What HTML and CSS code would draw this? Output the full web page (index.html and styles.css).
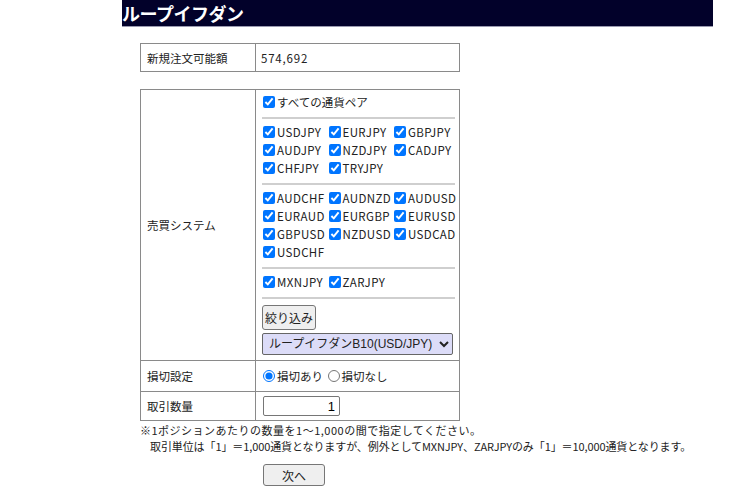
FILE: index.html
```html
<!DOCTYPE html>
<html lang="ja">
<head>
<meta charset="utf-8">
<link rel="stylesheet" href="styles.css">
</head>
<body>
<div class="page">
  <h1 class="title">ループイフダン</h1>
  <div class="content">
    <table class="tbl tbl1">
      <colgroup><col class="c-lbl"><col></colgroup>
      <tr><td class="lbl">新規注文可能額</td><td class="val num">574,692</td></tr>
    </table>
    <table class="tbl tbl2">
      <colgroup><col class="c-lbl"><col></colgroup>
      <tr class="r-sys">
        <td class="lbl">売買システム</td>
        <td class="val sys">
          <div class="line"><label class="ck"><input type="checkbox" checked>すべての通貨ペア</label></div>
          <hr>
          <div class="grid">
            <label class="ck"><input type="checkbox" checked>USDJPY</label>
            <label class="ck"><input type="checkbox" checked>EURJPY</label>
            <label class="ck"><input type="checkbox" checked>GBPJPY</label>
            <label class="ck"><input type="checkbox" checked>AUDJPY</label>
            <label class="ck"><input type="checkbox" checked>NZDJPY</label>
            <label class="ck"><input type="checkbox" checked>CADJPY</label>
            <label class="ck"><input type="checkbox" checked>CHFJPY</label>
            <label class="ck"><input type="checkbox" checked>TRYJPY</label>
          </div>
          <hr>
          <div class="grid">
            <label class="ck"><input type="checkbox" checked>AUDCHF</label>
            <label class="ck"><input type="checkbox" checked>AUDNZD</label>
            <label class="ck"><input type="checkbox" checked>AUDUSD</label>
            <label class="ck"><input type="checkbox" checked>EURAUD</label>
            <label class="ck"><input type="checkbox" checked>EURGBP</label>
            <label class="ck"><input type="checkbox" checked>EURUSD</label>
            <label class="ck"><input type="checkbox" checked>GBPUSD</label>
            <label class="ck"><input type="checkbox" checked>NZDUSD</label>
            <label class="ck"><input type="checkbox" checked>USDCAD</label>
            <label class="ck"><input type="checkbox" checked>USDCHF</label>
          </div>
          <hr>
          <div class="grid">
            <label class="ck"><input type="checkbox" checked>MXNJPY</label>
            <label class="ck"><input type="checkbox" checked>ZARJPY</label>
          </div>
          <hr>
          <div class="controls">
            <button class="btn filter" type="button">絞り込み</button>
            <select class="sel">
              <option>ループイフダンB10(USD/JPY)</option>
            </select>
          </div>
        </td>
      </tr>
      <tr class="r-stop">
        <td class="lbl">損切設定</td>
        <td class="val sub">
          <label class="rd"><input type="radio" name="stop" checked>損切あり</label>
          <label class="rd"><input type="radio" name="stop">損切なし</label>
        </td>
      </tr>
      <tr class="r-qty">
        <td class="lbl">取引数量</td>
        <td class="val sub"><input class="qty" type="text" value="1"></td>
      </tr>
    </table>
    <div class="notes">
      <p class="n1">※1ポジションあたりの数量を1～1,000の間で指定してください。</p>
      <p class="n2">取引単位は「1」＝1,000通貨となりますが、例外としてMXNJPY、ZARJPYのみ「1」＝10,000通貨となります。</p>
    </div>
    <div class="next-row"><button class="btn next" type="button">次へ</button></div>
  </div>
</div>
</body>
</html>
```
FILE: styles.css
```css
html, body {
  margin: 0;
  padding: 0;
  background: #fff;
}
body {
  font-family: "Noto Sans CJK JP", "Noto Sans", sans-serif;
  font-size: 11.5px;
  color: #222;
}
.page {
  margin-left: 122px;
  width: 591px;
}
.title {
  margin: 0;
  height: 26px;
  line-height: 26px;
  background: #02012a;
  color: #fff;
  font-size: 18px;
  font-weight: bold;
  letter-spacing: -0.5px;
  border-bottom: 1px solid #9a9ab0;
}
.content {
  padding-left: 18px;
}
.tbl {
  border-collapse: collapse;
  table-layout: fixed;
  width: 320px;
  border: 1px solid #777;
}
.c-lbl {
  width: 115px;
}
.tbl td {
  border: 1px solid #8a8a8a;
  padding: 0;
}
.tbl1 {
  margin-top: 16px;
  height: 29px;
}
.tbl2 {
  margin-top: 17px;
}
.lbl {
  padding-left: 6px !important;
  vertical-align: middle;
}
.val {
  padding-left: 5px !important;
  vertical-align: middle;
}
.num {
  letter-spacing: 0.8px;
}
.val.sub {
  padding-left: 6px !important;
}
.sys {
  padding: 3px 4px 5px 6px !important;
}
.line {
  height: 18px;
  line-height: 18px;
}
hr {
  border: none;
  height: 2px;
  background: #cfcfcf;
  margin: 6px 0 4px 0;
}
.grid {
  display: grid;
  grid-template-columns: 65.5px 65.5px 65.5px;
  grid-auto-rows: 18px;
  line-height: 18px;
  letter-spacing: 0.4px;
}
.ck, .rd {
  display: inline-flex;
  align-items: center;
  white-space: nowrap;
}
.ck input {
  width: 12px;
  height: 12px;
  margin: 0 2px 0 1px;
  accent-color: #0075ff;
}
.rd input {
  width: 12px;
  height: 12px;
  margin: 0 2px 0 1px;
  accent-color: #0075ff;
}
.rd + .rd {
  margin-left: 1px;
}
.controls {
  display: flex;
  flex-direction: column;
  align-items: flex-start;
  gap: 3px;
  margin-top: 6px;
}
.btn {
  font-family: "Noto Sans CJK JP", "Noto Sans", sans-serif;
  font-size: 12px;
  color: #222;
  background: #efefef;
  border: 1px solid #767676;
  border-radius: 3px;
  padding: 0;
}
.filter {
  width: 54px;
  height: 25px;
}
.sel {
  box-sizing: border-box;
  width: 191px;
  height: 22px;
  font-family: "Liberation Sans", "Noto Sans CJK JP", sans-serif;
  font-size: 12px;
  color: #222;
  background-color: #dcdcf8;
  border: 1px solid #666;
  border-radius: 2px;
  padding: 0 0 0 2px;
}
.r-stop {
  height: 31px;
}
.r-qty {
  height: 29px;
}
.qty {
  box-sizing: border-box;
  width: 77px;
  height: 20px;
  border: 1px solid #767676;
  border-radius: 2px;
  text-align: right;
  font-family: "Liberation Sans", sans-serif;
  font-size: 13px;
  padding: 0 4px;
  margin-left: 1px;
  display: block;
}
.notes {
  font-size: 11px;
  line-height: 16px;
  margin-top: 1px;
}
.notes p {
  margin: 0;
}
.notes .n1 {
  letter-spacing: 0.5px;
}
.notes .n2 {
  padding-left: 10px;
  letter-spacing: -0.1px;
}
.next-row {
  margin-top: 10px;
  padding-left: 123px;
}
.next {
  width: 62px;
  height: 22px;
}
```
